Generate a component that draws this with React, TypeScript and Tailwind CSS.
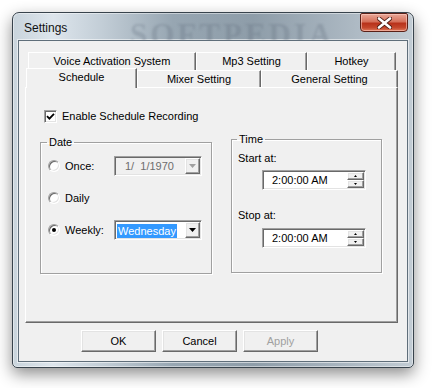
import React from 'react';

const raised =
  'bg-[#f0f0f0] border-t border-l border-r border-b border-t-white border-l-white border-r-[#696969] border-b-[#696969] shadow-[inset_-1px_-1px_0_#a0a0a0,inset_1px_1px_0_#e3e3e3]';
const sunken =
  'border-t border-l border-r border-b border-t-[#a0a0a0] border-l-[#a0a0a0] border-r-white border-b-white shadow-[inset_1px_1px_0_#696969,inset_-1px_-1px_0_#e3e3e3]';

function Tab({ label, w, selected }: { label: string; w: string; selected?: boolean }) {
  if (selected) {
    return (
      <div
        className={`${w} relative z-10 -mt-[2px] h-[20px] bg-[#f0f0f0] border-t border-l border-r border-t-white border-l-white border-r-[#696969] shadow-[inset_-1px_0_0_#a0a0a0] flex items-start justify-center pt-[2px] text-[11px] leading-[13px]`}
      >
        {label}
      </div>
    );
  }
  return (
    <div
      className={`${w} h-full bg-[#f0f0f0] border-t border-l border-r border-t-white border-l-white border-r-[#696969] shadow-[inset_-1px_0_0_#a0a0a0] flex items-center justify-center text-[11px] leading-[13px]`}
    >
      {label}
    </div>
  );
}

function Radio({ checked }: { checked?: boolean }) {
  return (
    <div className="w-[12px] h-[12px] rounded-full border border-t-[#a0a0a0] border-l-[#a0a0a0] border-r-white border-b-white bg-white shadow-[inset_1px_1px_0_#696969,inset_-1px_-1px_0_#e3e3e3] flex items-center justify-center">
      {checked && <div className="w-[4px] h-[4px] rounded-full bg-black" />}
    </div>
  );
}

function Arrow({ color }: { color: string }) {
  return (
    <svg width="7" height="4" viewBox="0 0 7 4">
      <path d="M0 0h7L3.5 4z" fill={color} />
    </svg>
  );
}

function Combo({ disabled, children }: { disabled?: boolean; children: React.ReactNode }) {
  return (
    <div
      className={`w-[88px] h-[20px] flex items-stretch ${sunken} ${disabled ? 'bg-[#f0f0f0]' : 'bg-white'}`}
    >
      <div className="flex-1 flex items-center pl-[2px] pt-[1px] text-[11px] leading-[13px] overflow-hidden">{children}</div>
      <div className={`w-[15px] my-[1px] mr-[1px] flex items-center justify-center ${raised}`}>
        <Arrow color={disabled ? '#a0a0a0' : '#000'} />
      </div>
    </div>
  );
}

function TimeField() {
  return (
    <div className={`ml-[30px] w-[104px] h-[20px] bg-white flex items-stretch ${sunken}`}>
      <div className="flex-1 flex items-center pl-[9px] pt-[1px] text-[11px] leading-[13px]">2:00:00 AM</div>
      <div className="w-[17px] my-[1px] mr-[1px] flex flex-col">
        <div className={`flex-1 flex items-center justify-center ${raised}`}>
          <svg width="3" height="2" viewBox="0 0 3 2">
            <path d="M0 2h3L1.5 0z" fill="#000" />
          </svg>
        </div>
        <div className={`flex-1 flex items-center justify-center ${raised}`}>
          <svg width="3" height="2" viewBox="0 0 3 2">
            <path d="M0 0h3L1.5 2z" fill="#000" />
          </svg>
        </div>
      </div>
    </div>
  );
}

function DlgButton({ label, disabled }: { label: string; disabled?: boolean }) {
  return (
    <div
      className={`w-[75px] h-[22px] flex items-center justify-center text-[11px] leading-[13px] ${raised} ${disabled ? 'text-[#a0a0a0]' : 'text-black'}`}
    >
      {label}
    </div>
  );
}

export default function App() {
  return (
    <div className="min-h-screen bg-white pl-[12px] pt-[12px] font-['Liberation_Sans',Arial,sans-serif] text-black">
      <div className="relative w-[402px] h-[356px] rounded-t-[7px] rounded-b-[5px] border border-[#38434c] bg-[linear-gradient(90deg,#c9d4dc_0%,#dde5ec_10%,#c3ced7_22%,#97a6b2_40%,#8e9da9_60%,#a3b0bb_78%,#c2ccd4_100%)] shadow-[0_6px_16px_rgba(0,0,0,0.45),inset_0_0_0_1px_rgba(255,255,255,0.45)] flex flex-col">
        {/* title bar */}
        <div className="relative h-[27px] flex items-start justify-between overflow-hidden">
          <span className="pl-[11px] pt-[8px] text-[12px] leading-[14px] text-[#111]">Settings</span>
          <span className="absolute left-[117px] top-[5px] font-['Liberation_Serif',serif] font-bold text-[31px] leading-[34px] tracking-[3px] text-[#5a6976]/25 blur-[0.8px] select-none">
            SOFTPEDIA
          </span>
          <div className="relative mr-[5px] w-[48px] h-[19px] rounded-b-[4px] rounded-t-[2px] border border-[#5a2017] bg-[linear-gradient(180deg,#e9a898_0%,#d5705a_45%,#b8321b_55%,#c4472c_80%,#e07a5c_100%)] shadow-[inset_0_0_0_1px_rgba(255,210,200,0.55)] flex items-center justify-center">
            <svg width="15" height="12" viewBox="0 0 15 12">
              <path d="M2 1.5L13 10.5M13 1.5L2 10.5" stroke="#4a1a12" strokeWidth="4.2" strokeLinecap="round" />
              <path d="M2 1.5L13 10.5M13 1.5L2 10.5" stroke="#fff" strokeWidth="2.6" strokeLinecap="round" />
            </svg>
          </div>
        </div>

        {/* client area */}
        <div className="mx-[5px] mb-[5px] flex-1 bg-[#f0f0f0] border border-[#5f6e7a] shadow-[0_0_0_1px_rgba(255,255,255,0.55)] px-[6px] pt-[11px]">
          <div className="ml-[3px] flex h-[18px]">
            <Tab label="Voice Activation System" w="w-[168px]" />
            <Tab label="Mp3 Setting" w="w-[111px]" />
            <Tab label="Hotkey" w="w-[89px]" />
          </div>
          <div className="ml-[1px] flex items-start h-[17px]">
            <Tab label="Schedule" w="w-[111px]" selected />
            <Tab label="Mixer Setting" w="w-[124px]" />
            <Tab label="General Setting" w="w-[137px]" />
          </div>

          <div className="w-[373px] h-[236px] border-t border-l border-r border-b border-t-white border-l-white border-r-[#696969] border-b-[#696969] shadow-[inset_-1px_-1px_0_#a0a0a0] pl-[14px] pt-[22px]">
            <div className="ml-[4px] flex items-center h-[13px]">
              <div className="w-[13px] h-[13px] bg-white border border-t-[#a0a0a0] border-l-[#a0a0a0] border-r-white border-b-white shadow-[inset_1px_1px_0_#696969,inset_-1px_-1px_0_#e3e3e3] flex items-center justify-center">
                <svg width="9" height="9" viewBox="0 0 9 9">
                  <path d="M1 4.2L3.4 6.6L8 1.8" stroke="#000" strokeWidth="1.8" fill="none" />
                </svg>
              </div>
              <span className="ml-[5px] text-[11px] leading-[13px]">Enable Schedule Recording</span>
            </div>

            <div className="flex items-start">
              <fieldset className="mt-[13px] w-[172px] h-[138px] border border-[#a0a0a0] shadow-[inset_1px_1px_0_#fff,1px_1px_0_#fff]">
                <legend className="ml-[6px] px-[2px] text-[11px] leading-[13px]">Date</legend>
                <div className="mt-[7px] pl-[7px] flex flex-col gap-[12px]">
                  <div className="h-[20px] flex items-center">
                    <Radio />
                    <span className="ml-[5px] text-[11px] leading-[13px] w-[45px]">Once:</span>
                    <span className="ml-[4px]">
                      <Combo disabled>
                        <span className="pl-[8px] text-[#6d6d6d] whitespace-pre">1/  1/1970</span>
                      </Combo>
                    </span>
                  </div>
                  <div className="h-[20px] flex items-center">
                    <Radio />
                    <span className="ml-[5px] text-[11px] leading-[13px]">Daily</span>
                  </div>
                  <div className="h-[20px] flex items-center">
                    <Radio checked />
                    <span className="ml-[5px] text-[11px] leading-[13px] w-[45px]">Weekly:</span>
                    <span className="ml-[4px]">
                      <Combo>
                        <span className="bg-[#3399ff] text-white px-[1px] leading-[14px]">Wednesday</span>
                      </Combo>
                    </span>
                  </div>
                </div>
              </fieldset>

              <fieldset className="ml-[19px] mt-[10px] w-[151px] h-[140px] border border-[#a0a0a0] shadow-[inset_1px_1px_0_#fff,1px_1px_0_#fff]">
                <legend className="ml-[5px] px-[2px] text-[11px] leading-[13px]">Time</legend>
                <div className="pl-[6px] mt-[6px] text-[11px] leading-[13px]">Start at:</div>
                <div className="mt-[5px]">
                  <TimeField />
                </div>
                <div className="pl-[6px] mt-[19px] text-[11px] leading-[13px]">Stop at:</div>
                <div className="mt-[6px]">
                  <TimeField />
                </div>
              </fieldset>
            </div>
          </div>

          <div className="mt-[7px] pl-[56px] flex gap-[6px]">
            <DlgButton label="OK" />
            <DlgButton label="Cancel" />
            <DlgButton label="Apply" disabled />
          </div>
        </div>
      </div>
    </div>
  );
}
